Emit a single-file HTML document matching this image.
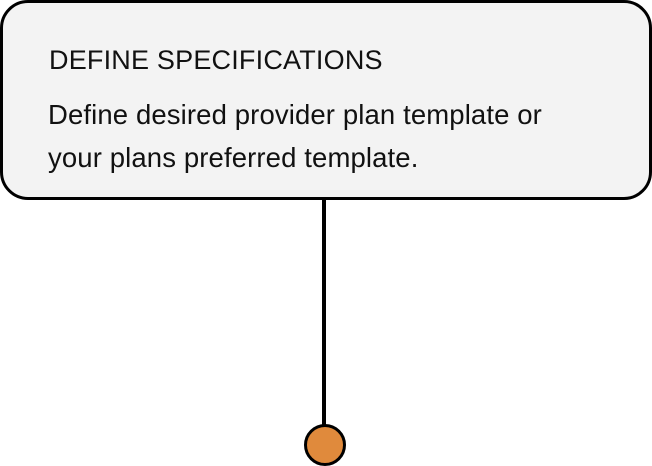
<!DOCTYPE html>
<html><head><style>
html,body{margin:0;padding:0;background:#fff;width:652px;height:465px;overflow:hidden}
.box{position:absolute;left:0;top:0;width:646px;height:194px;border:3px solid #000;border-radius:28px;background:#f3f3f3}
.t{position:absolute;left:49px;top:60px;font:27px "Liberation Sans",sans-serif;color:#111;letter-spacing:0.2px;line-height:0}
.b{position:absolute;left:48px;top:115px;font:27.5px "Liberation Sans",sans-serif;color:#111;letter-spacing:0.12px;line-height:0}
.b2{top:158px}
.line{position:absolute;left:322px;top:199px;width:4px;height:228px;background:#000}
.dot{position:absolute;left:304px;top:424px;width:36px;height:36px;border:3px solid #000;border-radius:50%;background:#e08a3c}
</style></head><body>
<div class="box"></div>
<div class="t">DEFINE SPECIFICATIONS</div>
<div class="b">Define desired provider plan template or</div>
<div class="b b2">your plans preferred template.</div>
<div class="line"></div>
<div class="dot"></div>
</body></html>
